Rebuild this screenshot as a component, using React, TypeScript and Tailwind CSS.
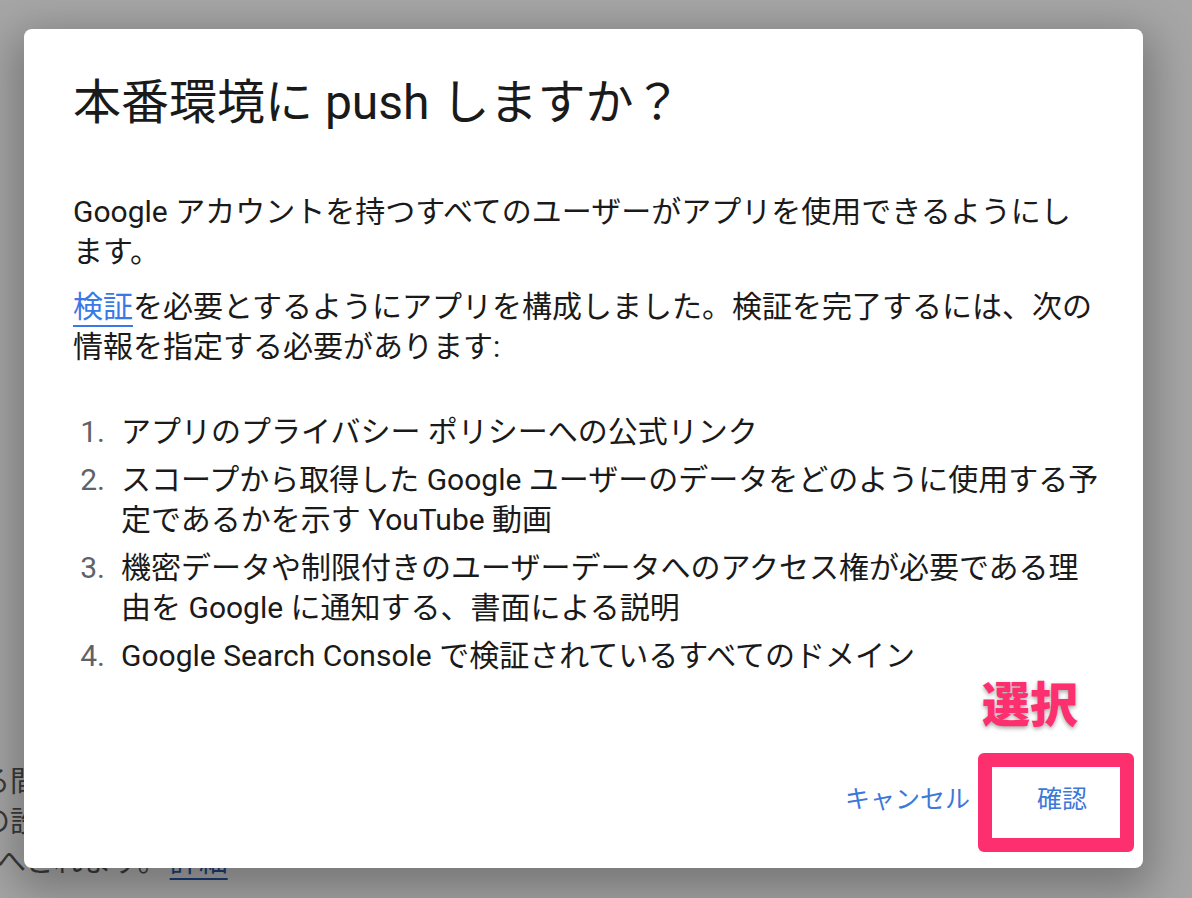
import React from "react";

const items: React.ReactNode[] = [
  "アプリのプライバシー ポリシーへの公式リンク",
  "スコープから取得した Google ユーザーのデータをどのように使用する予定であるかを示す YouTube 動画",
  "機密データや制限付きのユーザーデータへのアクセス権が必要である理由を Google に通知する、書面による説明",
  "Google Search Console で検証されているすべてのドメイン",
];

export default function App() {
  return (
    <div className="relative h-[898px] w-[1192px] overflow-hidden bg-[#a6a6a6] font-['Roboto','Noto_Sans_CJK_JP',sans-serif]">
      {/* dimmed page behind the dialog */}
      <div className="-ml-[19px] pt-[762px] text-[29px] leading-[40px] text-[#3a3a3a]">
        <div className="whitespace-nowrap">る間</div>
        <div className="whitespace-nowrap">の設</div>
        <div className="ml-[16px] whitespace-nowrap">
          へとれます。
          <span className="ml-[3px] text-[#1d3b78] underline decoration-2 underline-offset-[6px]">詳細</span>
        </div>
      </div>

      {/* dialog */}
      <div className="absolute left-[24px] top-[29px] flex h-[839px] w-[1119px] flex-col rounded-[8px] bg-white shadow-[0_14px_44px_10px_rgba(0,0,0,0.28)]">
        <div className="pl-[49px] pr-[46px] pt-[45px]">
          <h1 className="text-[48px] leading-[58px] font-normal text-[#1a1a1a]">本番環境に push しますか？</h1>

          <div className="mt-[60px] text-[30px] leading-[40px] text-[#1a1a1a]">
            <p>Google アカウントを持つすべてのユーザーがアプリを使用できるようにします。</p>
            <p className="mt-[15px]">
              <a className="text-[#3b78e7] underline decoration-2 underline-offset-[8px]">検証</a>
              を必要とするようにアプリを構成しました。検証を完了するには、次の情報を指定する必要があります:
            </p>

            <ol className="-mr-[6px] mt-[45px] flex flex-col gap-[8px]">
              {items.map((text, i) => (
                <li key={i} className="flex">
                  <span className="w-[32px] shrink-0 text-right text-[#5f6368]">{i + 1}.</span>
                  <span className="ml-[16px] flex-1">{text}</span>
                </li>
              ))}
            </ol>
          </div>
        </div>

        <div className="mt-auto flex justify-end gap-[19px] pb-[44px] pr-[32px] text-[25px] leading-[48px] text-[#3c78d8]">
          <button className="px-[24px]">キャンセル</button>
          <button className="px-[24px]">確認</button>
        </div>
      </div>

      {/* annotation */}
      <div className="absolute left-[982px] top-[676px] text-[48px] font-black leading-[60px] text-[#fe2f6e] [-webkit-text-stroke:7px_white] [paint-order:stroke_fill] [text-shadow:0_2px_4px_rgba(0,0,0,0.35)]">
        選択
      </div>
      <div className="absolute left-[978px] top-[753px] h-[99px] w-[156px] rounded-[6px] border-[14px] border-[#fe2f6e]" />
    </div>
  );
}
